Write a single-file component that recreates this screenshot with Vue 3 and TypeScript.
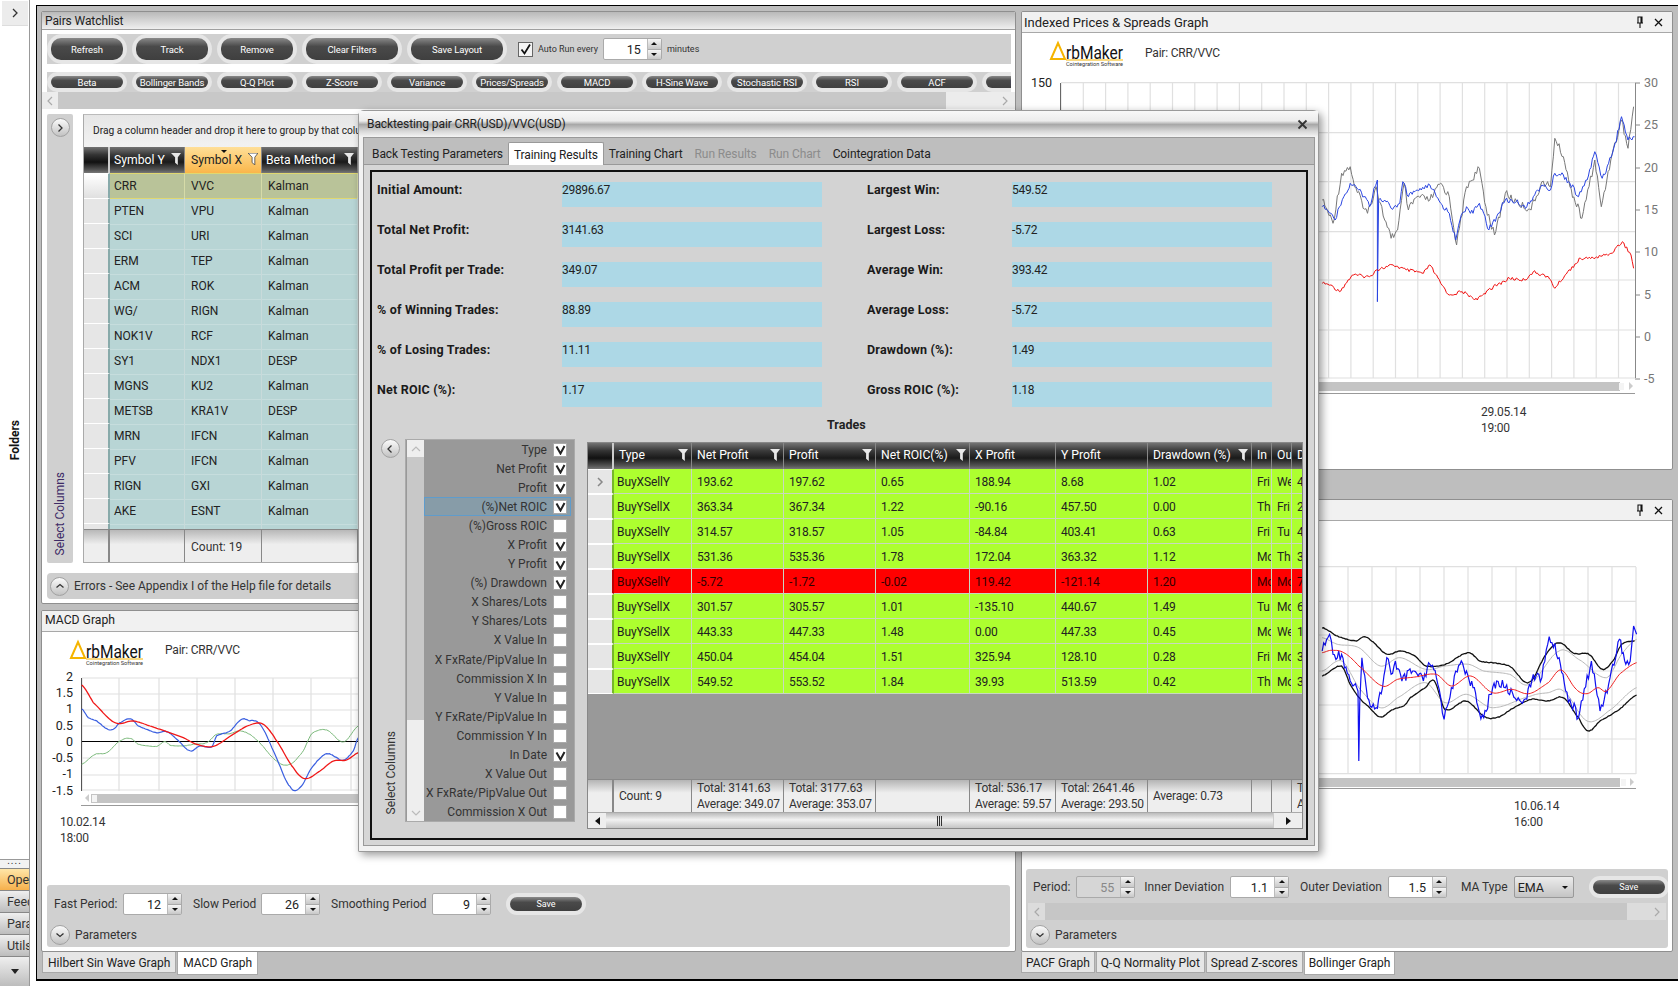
<script setup lang="ts">
type Pt = [number, number]

// chart traces, read off the reference; x/y are in the zoomed crop's units
function trace(raw: Pt[], x0: number, sx: number, y0: number, amp = 0, smooth = false): string {
  const out: string[] = []
  const step = 1.4
  let n = 0
  for (let i = 0; i < raw.length - 1; i++) {
    const [ax, ay] = raw[i]
    const [bx, by] = raw[i + 1]
    const before = raw[Math.max(0, i - 1)][1]
    const after = raw[Math.min(raw.length - 1, i + 2)][1]
    const x1 = x0 + ax / sx
    const x2 = x0 + bx / sx
    const parts = Math.max(1, Math.round(Math.abs(x2 - x1) / step))
    for (let k = 0; k < parts; k++) {
      const t = k / parts
      const r = Math.sin(++n * 12.9898) * 43758.5453
      const noise = (r - Math.floor(r) - 0.5) * amp
      let v = ay + (by - ay) * t
      if (smooth) {
        v = 0.5 * (2 * ay + (by - before) * t + (2 * before - 5 * ay + 4 * by - after) * t * t + (3 * ay - before - 3 * by + after) * t * t * t)
      }
      const y = y0 + v / 3 + (k === 0 && !smooth ? 0 : noise)
      out.push(`${(x1 + (x2 - x1) * t).toFixed(1)},${y.toFixed(1)}`)
    }
  }
  const last = raw[raw.length - 1]
  out.push(`${(x0 + last[0] / sx).toFixed(1)},${(y0 + last[1] / 3).toFixed(1)}`)
  return out.join(' ')
}

const S = 2.322

const priceBlue = trace([[725,620],[745,640],[755,660],[765,620],[775,590],[785,570],[790,550],[810,570],[825,590],[835,620],[845,565],[853,540],[853,905],[856,600],[870,600],[885,625],[905,610],[912,545],[925,590],[940,575],[955,570],[975,555],[990,590],[1000,610],[1020,640],[1035,720],[1045,660],[1060,620],[1075,640],[1090,610],[1100,640],[1112,690],[1130,650],[1150,600],[1175,605],[1200,620],[1215,590],[1235,555],[1255,570],[1265,520],[1285,525],[1300,550],[1320,590],[1340,540],[1358,455],[1375,535],[1390,490],[1405,430],[1420,350],[1435,420],[1450,410]], 1010, S, 0, 6)
const priceGray = trace([[725,600],[750,670],[770,520],[790,500],[800,560],[830,640],[850,560],[870,660],[885,715],[900,690],[915,550],[925,630],[945,590],[975,600],[1000,550],[1020,590],[1037,735],[1060,560],[1090,505],[1105,620],[1125,705],[1150,580],[1180,610],[1210,630],[1235,545],[1255,560],[1265,415],[1285,470],[1300,560],[1328,655],[1358,480],[1373,620],[1395,480],[1420,360],[1435,445],[1448,320]], 1010, S, 0, 8)
const priceRed = trace([[725,850],[745,855],[765,875],[795,825],[835,830],[850,810],[890,795],[920,810],[960,820],[975,795],[1000,850],[1020,885],[1050,875],[1085,900],[1110,870],[1160,835],[1195,840],[1215,815],[1250,830],[1265,865],[1295,815],[1325,775],[1355,775],[1395,760],[1422,725],[1442,765],[1448,805]], 1010, S, 0, 3.5)

const bbUpper = trace([[725,410],[760,435],[805,450],[820,437],[840,450],[875,490],[905,480],[940,495],[965,525],[1010,520],[1065,485],[1090,510],[1160,525],[1205,575],[1245,490],[1275,455],[1310,487],[1345,490],[1375,535],[1400,510],[1420,460],[1450,450]], 1010, S, 490, 0.7, true)
const bbLower = trace([[725,555],[770,525],[790,580],[810,620],[835,650],[860,678],[890,655],[915,645],[930,620],[965,590],[985,570],[1010,655],[1060,630],[1100,675],[1130,680],[1170,650],[1210,625],[1250,630],[1285,620],[1320,680],[1342,720],[1370,690],[1415,655],[1455,612]], 1010, S, 490, 0.7, true)
const bbInnerUp = trace([[725,440],[760,460],[810,470],[860,525],[905,500],[965,535],[1010,525],[1065,520],[1100,540],[1160,550],[1205,580],[1275,480],[1320,505],[1385,560],[1420,490],[1455,445]], 1010, S, 490, 0, true)
const bbInnerLow = trace([[725,540],[770,510],[810,590],[860,650],[900,620],[965,575],[1010,635],[1060,610],[1120,650],[1210,615],[1250,605],[1285,600],[1340,690],[1390,660],[1455,590]], 1010, S, 490, 0, true)
const bbMa = trace([[725,485],[745,478],[775,485],[810,525],[865,585],[900,565],[940,558],[990,550],[1025,585],[1070,555],[1120,605],[1165,595],[1205,608],[1250,575],[1280,537],[1315,595],[1340,608],[1365,590],[1385,600],[1415,550],[1455,515]], 1010, S, 490, 0, true)
const bbBlue = trace([[725,480],[742,430],[750,490],[770,490],[790,570],[808,600],[810,810],[812,640],[817,500],[830,620],[850,650],[865,590],[875,500],[885,550],[895,510],[910,570],[935,540],[960,570],[975,520],[990,560],[1000,620],[1008,685],[1025,590],[1045,520],[1060,540],[1075,590],[1090,665],[1100,680],[1115,610],[1130,570],[1150,590],[1180,620],[1200,625],[1215,550],[1235,560],[1252,437],[1275,500],[1290,600],[1320,680],[1350,510],[1370,660],[1390,580],[1415,445],[1430,520],[1440,510],[1448,405],[1455,430]], 1010, S, 490, 11)

const macdRed = trace([[245,372],[280,425],[345,485],[400,480],[450,495],[500,512],[550,530],[590,550],[640,556],[700,520],[750,492],[790,490],[830,540],[880,620],[915,653],[960,630],[1000,600],[1040,597],[1075,575]], 0, 3, 560, 0, true)
const macdBlue = trace([[245,443],[265,470],[290,480],[320,503],[340,505],[360,485],[392,473],[415,495],[470,515],[500,512],[530,535],[570,570],[600,555],[635,558],[650,525],[690,510],[725,475],[745,478],[780,490],[820,570],[870,677],[900,680],[935,620],[980,578],[1030,598],[1060,570],[1075,530]], 0, 3, 560, 0.5, true)
const macdGreen = trace([[245,610],[285,580],[320,575],[360,540],[392,532],[415,550],[470,556],[495,542],[510,553],[550,555],[580,550],[620,545],[650,520],[690,518],[725,510],[770,537],[830,600],[870,610],[910,570],[935,518],[980,507],[1030,543],[1075,495]], 0, 3, 560, 0.4, true)

function steps(from: number, to: number, by: number): number[] {
  const list: number[] = []
  for (let v = from; v <= to + 0.5; v += by) list.push(v)
  return list
}

const priceV = steps(1061, 1635, 22.3)
const priceH = [82.7, 132.7, 181.7, 231.7, 280, 330, 378]
const priceAxis: [string, number][] = [['30', 83], ['25', 125], ['20', 168], ['15', 210], ['10', 252], ['5', 295], ['0', 337], ['-5', 379]]
const bbV = steps(1348, 1636, 24)
const bbH = [565.7, 600.3, 634, 670, 704, 738, 772.7]
const macdV = [82, 119, 159, 197, 235, 273, 311, 351]
const macdH = [677, 693, 709, 725, 757, 774, 789]
const macdAxis: [string, number][] = [['2', 676], ['1.5', 692], ['1', 708], ['0.5', 725], ['0', 741], ['-0.5', 757], ['-1', 773], ['-1.5', 790]]

const mainButtons = [
  { label: 'Refresh', w: 80 },
  { label: 'Track', w: 80 },
  { label: 'Remove', w: 80 },
  { label: 'Clear Filters', w: 100 },
  { label: 'Save Layout', w: 100 }
]
const graphButtons = ['Beta', 'Bollinger Bands', 'Q-Q Plot', 'Z-Score', 'Variance', 'Prices/Spreads', 'MACD', 'H-Sine Wave', 'Stochastic RSI', 'RSI', 'ACF', 'PACF']

const pairs = [
  ['CRR', 'VVC', 'Kalman'], ['PTEN', 'VPU', 'Kalman'], ['SCI', 'URI', 'Kalman'], ['ERM', 'TEP', 'Kalman'],
  ['ACM', 'ROK', 'Kalman'], ['WG/', 'RIGN', 'Kalman'], ['NOK1V', 'RCF', 'Kalman'], ['SY1', 'NDX1', 'DESP'],
  ['MGNS', 'KU2', 'Kalman'], ['METSB', 'KRA1V', 'DESP'], ['MRN', 'IFCN', 'Kalman'], ['PFV', 'IFCN', 'Kalman'],
  ['RIGN', 'GXI', 'Kalman'], ['AKE', 'ESNT', 'Kalman'], ['', '', '']
]

const stats = [
  ['Initial Amount:', '29896.67', 'Largest Win:', '549.52'],
  ['Total Net Profit:', '3141.63', 'Largest Loss:', '-5.72'],
  ['Total Profit per Trade:', '349.07', 'Average Win:', '393.42'],
  ['% of Winning Trades:', '88.89', 'Average Loss:', '-5.72'],
  ['% of Losing Trades:', '11.11', 'Drawdown (%):', '1.49'],
  ['Net ROIC (%):', '1.17', 'Gross ROIC (%):', '1.18']
]

const columnChoices: [string, boolean][] = [
  ['Type', true], ['Net Profit', true], ['Profit', true], ['(%)Net ROIC', true], ['(%)Gross ROIC', false],
  ['X Profit', true], ['Y Profit', true], ['(%) Drawdown', true], ['X Shares/Lots', false], ['Y Shares/Lots', false],
  ['X Value In', false], ['X FxRate/PipValue In', false], ['Commission X In', false], ['Y Value In', false],
  ['Y FxRate/PipValue In', false], ['Commission Y In', false], ['In Date', true], ['X Value Out', false],
  ['X FxRate/PipValue Out', false], ['Commission X Out', false]
]

const tradeHeads: [string, boolean][] = [
  ['Type', true], ['Net Profit', true], ['Profit', true], ['Net ROIC(%)', true], ['X Profit', false],
  ['Y Profit', false], ['Drawdown (%)', true], ['In', false], ['Ou', false], ['D', false]
]
const trades = [
  ['BuyXSellY', '193.62', '197.62', '0.65', '188.94', '8.68', '1.02', 'Fri', 'We', '4'],
  ['BuyYSellX', '363.34', '367.34', '1.22', '-90.16', '457.50', '0.00', 'Th', 'Fri', '2'],
  ['BuyXSellY', '314.57', '318.57', '1.05', '-84.84', '403.41', '0.63', 'Fri', 'Tu', '4'],
  ['BuyYSellX', '531.36', '535.36', '1.78', '172.04', '363.32', '1.12', 'Mo', 'Th', '3'],
  ['BuyXSellY', '-5.72', '-1.72', '-0.02', '119.42', '-121.14', '1.20', 'Mo', 'Mo', '7'],
  ['BuyYSellX', '301.57', '305.57', '1.01', '-135.10', '440.67', '1.49', 'Tu', 'Mo', '6'],
  ['BuyYSellX', '443.33', '447.33', '1.48', '0.00', '447.33', '0.45', 'Mo', 'We', '1'],
  ['BuyXSellY', '450.04', '454.04', '1.51', '325.94', '128.10', '0.28', 'Fri', 'Mo', '3'],
  ['BuyYSellX', '549.52', '553.52', '1.84', '39.93', '513.59', '0.42', 'Th', 'Mo', '3']
]
const tradeFoot = [
  ['Count: 9'],
  ['Total: 3141.63', 'Average: 349.07'],
  ['Total: 3177.63', 'Average: 353.07'],
  [],
  ['Total: 536.17', 'Average: 59.57'],
  ['Total: 2641.46', 'Average: 293.50'],
  ['Average: 0.73'],
  [],
  [],
  ['Total', 'Average']
]

const macdParams = [
  { label: 'Fast Period:', value: '12' },
  { label: 'Slow Period', value: '26' },
  { label: 'Smoothing Period', value: '9' }
]
</script>

<template>
  <div class="app">
    <aside class="sidebar">
      <div class="side-open">
        <svg width="10" height="12" viewBox="0 0 10 12"><path d="M3 2l4 4-4 4" fill="none" stroke="#333" stroke-width="1.3" /></svg>
      </div>
      <div class="side-title">Folders</div>
      <div class="side-grip">....</div>
      <div class="side-item active">Open</div>
      <div class="side-item">Feeds</div>
      <div class="side-item">Params</div>
      <div class="side-item">Utils</div>
      <div class="side-item more"><svg width="8" height="5" viewBox="0 0 8 5"><path d="M0 0h8L4 5z" fill="#222" /></svg></div>
    </aside>

    <main class="workspace">
      <div class="left-col">
        <section class="panel watchlist">
          <header class="watch-title">Pairs Watchlist</header>
          <div class="watch-body">
            <div class="toolbar">
              <button v-for="b in mainButtons" :key="b.label" class="pill big" :class="{ wide: b.w === 100 }"><span>{{ b.label }}</span></button>
              <span class="check-box">
                <svg width="13" height="13" viewBox="0 0 13 13"><path d="M2.5 6.5l3 4L11 1.5" fill="none" stroke="#111" stroke-width="1.8" /></svg>
              </span>
              <span class="auto-text">Auto Run every</span>
              <div class="spin auto-spin">
                <span class="spin-val">15</span>
                <span class="spin-btns"><i class="up"></i><i class="down"></i></span>
              </div>
              <span class="auto-text minutes">minutes</span>
            </div>
            <div class="graph-row">
              <button v-for="b in graphButtons" :key="b" class="pill small"><span>{{ b }}</span></button>
            </div>
            <div class="hscroll">
              <span class="hs-left"><svg width="8" height="10" viewBox="0 0 8 10"><path d="M6 1L2 5l4 4" fill="none" stroke="#aaa" stroke-width="1.2" /></svg></span>
              <span class="hs-right"><svg width="8" height="10" viewBox="0 0 8 10"><path d="M2 1l4 4-4 4" fill="none" stroke="#aaa" stroke-width="1.2" /></svg></span>
            </div>
            <div class="watch-main">
              <div class="select-side">
                <span class="round">
                  <svg width="10" height="10" viewBox="0 0 10 10"><path d="M3.5 1.5L7 5 3.5 8.5" fill="none" stroke="#333" stroke-width="1.3" /></svg>
                </span>
                <span class="vert-label">Select Columns</span>
              </div>
              <div class="pair-grid">
                <div class="group-head">Drag a column header and drop it here to group by that column</div>
                <div class="pair-cols pair-head">
                  <span class="corner"></span>
                  <span class="hcell">Symbol Y<svg class="funnel" viewBox="0 0 11 13"><path d="M0 0h11L7.5 4.5V13L4.5 10.5V4.5z" fill="#e8e8e8" /></svg></span>
                  <span class="hcell sorted">Symbol X<i class="sort-mark"></i><svg class="funnel" viewBox="0 0 11 13"><path d="M0 0h11L7.5 4.5V13L4.5 10.5V4.5z" fill="#fff" stroke="#333" stroke-width=".8" /></svg></span>
                  <span class="hcell">Beta Method<svg class="funnel" viewBox="0 0 11 13"><path d="M0 0h11L7.5 4.5V13L4.5 10.5V4.5z" fill="#e8e8e8" /></svg></span>
                  <span class="hcell"></span>
                </div>
                <div class="pair-rows">
                  <div v-for="(p, i) in pairs" :key="i" class="pair-cols pair-row" :class="{ current: i === 0 }">
                    <span class="rowhead"></span>
                    <span v-for="(c, j) in p" :key="j" class="pcell">{{ c }}</span>
                    <span class="pcell"></span>
                  </div>
                </div>
                <div class="pair-cols pair-foot">
                  <span class="fcell"></span>
                  <span class="fcell"></span>
                  <span class="fcell">Count: 19</span>
                  <span class="fcell"></span>
                  <span class="fcell"></span>
                </div>
              </div>
            </div>
            <div class="errors-bar">
              <span class="round">
                <svg width="10" height="10" viewBox="0 0 10 10"><path d="M1.5 6.5L5 3.5l3.5 3" fill="none" stroke="#333" stroke-width="1.3" /></svg>
              </span>
              <span>Errors - See Appendix I of the Help file for details</span>
            </div>
          </div>
        </section>

        <section class="panel macd">
          <header class="plain-title">MACD Graph</header>
          <div class="chart-body">
            <svg class="chart" width="973" height="253" viewBox="42 631 973 253">
              <path d="M71 657L78 641L85 657Z" fill="none" stroke="#f5b400" stroke-width="2" />
              <text x="86" y="657" class="logo-main" textLength="57" lengthAdjust="spacingAndGlyphs">rbMaker</text>
              <line x1="86" y1="658" x2="143" y2="658" stroke="#f5b400" />
              <text x="86" y="664" class="logo-sub" textLength="57" lengthAdjust="spacingAndGlyphs">Cointegration  Software</text>
              <text x="165" y="653" class="chart-text">Pair: CRR/VVC</text>
              <line v-for="x in macdV" :key="x" :x1="x" y1="677" :x2="x" y2="790" class="grid-line" />
              <line v-for="y in macdH" :key="y" x1="82" :y1="y" x2="1010" :y2="y" class="grid-line" />
              <line x1="81.5" y1="677" x2="81.5" y2="790" stroke="#555" />
              <line x1="82" y1="740.5" x2="1010" y2="740.5" stroke="#000" />
              <polyline :points="macdGreen" fill="none" stroke="#7ab87a" />
              <polyline :points="macdBlue" fill="none" stroke="#3a5fe0" stroke-width="1.2" />
              <polyline :points="macdRed" fill="none" stroke="#f01818" stroke-width="1.3" />
              <text v-for="t in macdAxis" :key="t[0]" x="73" :y="t[1] + 4" class="axis-text end">{{ t[0] }}</text>
              <path d="M85 797l4 -4v8z" fill="#ccc" />
              <rect x="91" y="793" width="919" height="9" fill="#c4c4c4" />
              <rect x="92" y="794" width="5" height="7" fill="#f4f4f4" />
              <line x1="81" y1="804.5" x2="1010" y2="804.5" stroke="#999" />
              <text x="60" y="825" class="chart-text">10.02.14</text>
              <text x="60" y="841" class="chart-text">18:00</text>
            </svg>
            <div class="params">
              <div class="param-line">
                <template v-for="p in macdParams" :key="p.label">
                  <span class="param-label">{{ p.label }}</span>
                  <div class="spin">
                    <span class="spin-val">{{ p.value }}</span>
                    <span class="spin-btns"><i class="up"></i><i class="down"></i></span>
                  </div>
                </template>
                <button class="pill save"><span>Save</span></button>
              </div>
              <div class="param-foot">
                <span class="round">
                  <svg width="10" height="10" viewBox="0 0 10 10"><path d="M1.5 3.5L5 6.5l3.5-3" fill="none" stroke="#333" stroke-width="1.3" /></svg>
                </span>
                <span>Parameters</span>
              </div>
            </div>
          </div>
        </section>
        <nav class="tabs">
          <span class="tab">Hilbert Sin Wave Graph</span>
          <span class="tab on">MACD Graph</span>
        </nav>
      </div>

      <div class="right-col">
        <section class="panel prices">
          <header class="plain-title with-tools">
            <span>Indexed Prices &amp; Spreads Graph</span>
            <svg class="pin" width="8" height="12" viewBox="0 0 8 12"><path d="M2 1h4v6H2zM1 7h6M4 7v5M5 1v6" fill="none" stroke="#111" stroke-width="1.1" /></svg>
            <svg class="close" width="9" height="9" viewBox="0 0 9 9"><path d="M1 1l7 7M8 1L1 8" stroke="#111" stroke-width="1.3" /></svg>
          </header>
          <svg class="chart" width="650" height="437" viewBox="1022 33 650 437">
            <path d="M1051 59L1058 43L1065 59Z" fill="none" stroke="#f5b400" stroke-width="2" />
            <text x="1066" y="59" class="logo-main" textLength="57" lengthAdjust="spacingAndGlyphs">rbMaker</text>
            <line x1="1066" y1="60" x2="1123" y2="60" stroke="#f5b400" />
            <text x="1066" y="66" class="logo-sub" textLength="57" lengthAdjust="spacingAndGlyphs">Cointegration  Software</text>
            <text x="1145" y="57" class="chart-text">Pair: CRR/VVC</text>
            <line v-for="x in priceV" :key="x" :x1="x" y1="83" :x2="x" y2="378" class="grid-line" />
            <line v-for="y in priceH" :key="y" x1="1061" :y1="y" x2="1635" :y2="y" class="grid-line" />
            <line x1="1060.5" y1="83" x2="1060.5" y2="378" stroke="#666" />
            <line x1="1635.5" y1="83" x2="1635.5" y2="378" stroke="#888" />
            <line v-for="t in priceAxis" :key="t[0]" x1="1635" :y1="t[1]" x2="1640" :y2="t[1]" stroke="#888" />
            <polyline :points="priceGray" fill="none" stroke="#777" />
            <polyline :points="priceBlue" fill="none" stroke="#2a45e0" />
            <polyline :points="priceRed" fill="none" stroke="#f01010" />
            <text x="1052" y="87" class="axis-text end">150</text>
            <text v-for="t in priceAxis" :key="t[0]" x="1644" :y="t[1] + 4" class="axis-text gray">{{ t[0] }}</text>
            <rect x="1061" y="382" width="559" height="9" fill="#c4c4c4" />
            <rect x="1619" y="383" width="5" height="7" fill="#f4f4f4" />
            <path d="M1629 382l4 4-4 4z" fill="#ccc" />
            <line x1="1061" y1="393.5" x2="1635" y2="393.5" stroke="#999" />
            <text x="1481" y="416" class="chart-text">29.05.14</text>
            <text x="1481" y="432" class="chart-text">19:00</text>
          </svg>
        </section>

        <section class="panel bollinger">
          <header class="plain-title with-tools">
            <span></span>
            <svg class="pin" width="8" height="12" viewBox="0 0 8 12"><path d="M2 1h4v6H2zM1 7h6M4 7v5M5 1v6" fill="none" stroke="#111" stroke-width="1.1" /></svg>
            <svg class="close" width="9" height="9" viewBox="0 0 9 9"><path d="M1 1l7 7M8 1L1 8" stroke="#111" stroke-width="1.3" /></svg>
          </header>
          <svg class="chart" width="650" height="348" viewBox="1022 520 650 348">
            <line v-for="x in bbV" :key="x" :x1="x" y1="566" :x2="x" y2="773" class="grid-line" />
            <line v-for="y in bbH" :key="y" x1="1061" :y1="y" x2="1636" :y2="y" class="grid-line" />
            <polyline :points="bbInnerUp" fill="none" stroke="#b8b8b8" />
            <polyline :points="bbInnerLow" fill="none" stroke="#b8b8b8" />
            <polyline :points="bbUpper" fill="none" stroke="#111" stroke-width="1.3" />
            <polyline :points="bbLower" fill="none" stroke="#111" stroke-width="1.3" />
            <polyline :points="bbBlue" fill="none" stroke="#1010f0" stroke-width="1.2" />
            <polyline :points="bbMa" fill="none" stroke="#f02020" />
            <rect x="1061" y="777" width="559" height="9" fill="#c4c4c4" />
            <rect x="1621" y="778" width="5" height="7" fill="#f4f4f4" />
            <path d="M1630 777l4 4-4 4z" fill="#ccc" />
            <line x1="1061" y1="787.5" x2="1636" y2="787.5" stroke="#999" />
            <text x="1514" y="809" class="chart-text">10.06.14</text>
            <text x="1514" y="825" class="chart-text">16:00</text>
          </svg>
          <div class="params bb-params">
            <div class="param-line bb-line">
              <span class="param-label">Period:</span>
              <div class="spin off">
                <span class="spin-val">55</span>
                <span class="spin-btns"><i class="up"></i><i class="down"></i></span>
              </div>
              <span class="param-label">Inner Deviation</span>
              <div class="spin">
                <span class="spin-val">1.1</span>
                <span class="spin-btns"><i class="up"></i><i class="down"></i></span>
              </div>
              <span class="param-label">Outer Deviation</span>
              <div class="spin">
                <span class="spin-val">1.5</span>
                <span class="spin-btns"><i class="up"></i><i class="down"></i></span>
              </div>
              <span class="param-label">MA Type</span>
              <div class="combo"><span>EMA</span><i class="down"></i></div>
              <button class="pill save cut"><span>Save</span></button>
            </div>
            <div class="bb-scroll">
              <span class="bb-left"><svg width="8" height="10" viewBox="0 0 8 10"><path d="M6 1L2 5l4 4" fill="none" stroke="#aaa" stroke-width="1.2" /></svg></span>
              <span class="bb-right"><svg width="8" height="10" viewBox="0 0 8 10"><path d="M2 1l4 4-4 4" fill="none" stroke="#aaa" stroke-width="1.2" /></svg></span>
            </div>
            <div class="param-foot bb-foot">
              <span class="round">
                <svg width="10" height="10" viewBox="0 0 10 10"><path d="M1.5 3.5L5 6.5l3.5-3" fill="none" stroke="#333" stroke-width="1.3" /></svg>
              </span>
              <span>Parameters</span>
            </div>
          </div>
        </section>
        <nav class="tabs">
          <span class="tab">PACF Graph</span>
          <span class="tab">Q-Q Normality Plot</span>
          <span class="tab">Spread Z-scores</span>
          <span class="tab on">Bollinger Graph</span>
        </nav>
      </div>
    </main>

    <div class="modal">
      <header class="modal-title">
        <span>Backtesting pair CRR(USD)/VVC(USD)</span>
        <svg width="11" height="11" viewBox="0 0 11 11"><path d="M1.5 1.5l8 8M9.5 1.5l-8 8" stroke="#333" stroke-width="1.8" /></svg>
      </header>
      <div class="modal-frame">
        <nav class="modal-tabs">
          <span class="mtab">Back Testing Parameters</span>
          <span class="mtab on">Training Results</span>
          <span class="mtab">Training Chart</span>
          <span class="mtab dim">Run Results</span>
          <span class="mtab dim">Run Chart</span>
          <span class="mtab last">Cointegration Data</span>
        </nav>
        <div class="modal-pane">
          <div class="results">
            <div class="stat-grid">
              <template v-for="s in stats" :key="s[0]">
                <span class="stat-label">{{ s[0] }}</span>
                <span class="stat-val">{{ s[1] }}</span>
                <span></span>
                <span class="stat-label">{{ s[2] }}</span>
                <span class="stat-val">{{ s[3] }}</span>
              </template>
            </div>
            <div class="trades-title">Trades</div>
            <div class="trades-area">
              <div class="select-side inner">
                <span class="round">
                  <svg width="10" height="10" viewBox="0 0 10 10"><path d="M6.5 1.5L3 5l3.500 3.500" fill="none" stroke="#333" stroke-width="1.3" /></svg>
                </span>
                <span class="vert-label plain">Select Columns</span>
              </div>
              <div class="col-list">
                <div class="col-scroll">
                  <span class="cs-up"><svg width="10" height="6" viewBox="0 0 10 6"><path d="M1 5l4-4 4 4" fill="none" stroke="#bbb" stroke-width="1.2" /></svg></span>
                  <span class="cs-track"></span>
                  <span class="cs-down"><svg width="10" height="6" viewBox="0 0 10 6"><path d="M1 1l4 4 4-4" fill="none" stroke="#bbb" stroke-width="1.2" /></svg></span>
                </div>
                <div class="col-items">
                  <div v-for="(c, i) in columnChoices" :key="c[0]" class="col-item" :class="{ hot: i === 3 }">
                    <span>{{ c[0] }}</span>
                    <span class="col-check">
                      <svg v-if="c[1]" width="11" height="11" viewBox="0 0 11 11"><path d="M1.5 2.5L5.5 9.5 9.5 2" fill="none" stroke="#222" stroke-width="2" /></svg>
                    </span>
                  </div>
                </div>
              </div>
              <div class="trade-grid">
                <div class="trade-cols trade-head">
                  <span class="corner"></span>
                  <span v-for="h in tradeHeads" :key="h[0]" class="hcell small-h">{{ h[0] }}<svg v-if="h[1]" class="funnel" viewBox="0 0 11 13"><path d="M0 0h11L7.5 4.5V13L4.5 10.5V4.5z" fill="#e8e8e8" /></svg></span>
                </div>
                <div class="trade-rows">
                  <div v-for="(t, i) in trades" :key="i" class="trade-cols trade-row" :class="{ loss: i === 4 }">
                    <span class="rowhead">
                      <svg v-if="i === 0" width="8" height="10" viewBox="0 0 8 10"><path d="M2 1l4 4-4 4" fill="none" stroke="#888" stroke-width="1.5" /></svg>
                    </span>
                    <span v-for="(c, j) in t" :key="j" class="tcell">{{ c }}</span>
                  </div>
                </div>
                <div class="trade-cols trade-foot">
                  <span class="fcell"></span>
                  <span v-for="(f, i) in tradeFoot" :key="i" class="fcell two">
                    <span v-for="line in f" :key="line">{{ line }}</span>
                  </span>
                </div>
                <div class="trade-scroll">
                  <span class="ts-btn"><svg width="5" height="8" viewBox="0 0 5 8"><path d="M5 0v8L0 4z" fill="#111" /></svg></span>
                  <span class="ts-thumb"><i></i><i></i><i></i></span>
                  <span class="ts-btn"><svg width="5" height="8" viewBox="0 0 5 8"><path d="M0 0v8l5-4z" fill="#111" /></svg></span>
                </div>
              </div>
            </div>
          </div>
        </div>
      </div>
    </div>
  </div>
</template>

<style>
html, body {
  margin: 0;
  background: #fff;
  overflow: hidden;
}
</style>

<style scoped>
.app {
  position: relative;
  display: flex;
  width: 1680px;
  height: 986px;
  background: #fff;
  color: #222;
  font-family: Roboto, "Liberation Sans", sans-serif;
  font-size: 12px;
  overflow: hidden;
}

.sidebar {
  display: flex;
  flex-direction: column;
  width: 29px;
  height: 986px;
  border-right: 1px solid #999;
  box-sizing: content-box;
}
.side-open {
  display: flex;
  align-items: center;
  justify-content: center;
  height: 24px;
  margin: 1px 1px 0 2px;
  background: #ececec;
  border-bottom: 1px solid #ddd;
}
.side-title {
  margin: 394px auto 0;
  padding-right: 1px;
  writing-mode: vertical-rl;
  transform: rotate(180deg);
  font-weight: 700;
  font-size: 12px;
  color: #111;
}
.side-grip {
  margin-top: auto;
  height: 8px;
  line-height: 2px;
  text-align: center;
  font-size: 10px;
  letter-spacing: 1px;
  color: #333;
  border-top: 1px solid #999;
  background: #f2f2f2;
}
.side-item {
  height: 21px;
  line-height: 21px;
  padding-left: 7px;
  overflow: hidden;
  white-space: nowrap;
  border-top: 1px solid #888;
  background: linear-gradient(#efefef, #bdbdbd);
  color: #333;
  font-size: 12.5px;
}
.side-item.active {
  background: linear-gradient(#ffe6a8, #f6b04c);
}
.side-item.more {
  display: flex;
  align-items: center;
  justify-content: center;
  height: 29px;
  padding: 0;
}

.workspace {
  display: flex;
  gap: 5px;
  box-sizing: border-box;
  height: 976px;
  width: 1642px;
  margin: 5px 0 0 6px;
  padding: 5px 5px 0 4px;
  background: #bebebe;
  border: solid #000;
  border-width: 1px 0 2px 1px;
}
.left-col {
  display: flex;
  flex-direction: column;
  width: 975px;
  flex: none;
}
.right-col {
  display: flex;
  flex-direction: column;
  width: 652px;
  flex: none;
}

.panel {
  box-sizing: border-box;
  border: 1px solid #8f8f8f;
  border-radius: 2px;
  background: #fff;
  overflow: hidden;
}
.watchlist {
  height: 593px;
  flex: none;
  margin-bottom: 6px;
}
.watch-title {
  height: 17px;
  padding-left: 3px;
  line-height: 19px;
  letter-spacing: -0.1px;
  background: linear-gradient(#b9b9b9, #efefef);
  border-bottom: 1px solid #a0a0a0;
  color: #222;
}
.watch-body {
  padding: 4px 4px 0 5px;
  overflow: hidden;
}
.toolbar {
  display: flex;
  align-items: center;
  gap: 5px;
  height: 30px;
  background: #d0d0d0;
}
.pill {
  flex: none;
  box-sizing: border-box;
  display: flex;
  align-items: stretch;
  width: 80px;
  margin: 0;
  padding: 0;
  border: 0;
  background: #e6e6e6;
  border-radius: 16px;
  font-family: inherit;
}
.pill span {
  flex: 1;
  margin: 4px;
  border-radius: 10px;
  background: linear-gradient(#8a8a8a, #4a4a4a 38%, #3f3f3f);
  color: #fff;
  font-size: 9.5px;
  letter-spacing: -0.1px;
  display: flex;
  align-items: center;
  justify-content: center;
  white-space: nowrap;
}
.pill.big {
  height: 30px;
}
.pill.big.wide {
  width: 100px;
}
.pill.small {
  height: 20px;
}
.check-box {
  display: flex;
  width: 13px;
  height: 13px;
  margin-left: 6px;
  background: #f4f4f4;
  border: 1px solid #666;
  flex: none;
}
.auto-text {
  font-size: 9px;
  color: #333;
  white-space: nowrap;
}
.spin {
  flex: none;
  display: flex;
  box-sizing: border-box;
  width: 59px;
  height: 22px;
  background: #fff;
  border: 1px solid #aaa;
  border-radius: 2px;
}
.spin-val {
  flex: 1;
  text-align: right;
  padding-right: 6px;
  line-height: 21px;
  font-size: 12.5px;
  color: #222;
}
.spin-btns {
  display: flex;
  flex-direction: column;
  width: 13px;
  flex: none;
  border-left: 1px solid #bbb;
  background: #eee;
}
.spin-btns i {
  flex: 1;
  display: flex;
  align-items: center;
  justify-content: center;
  background: linear-gradient(#f6f6f6, #c8c8c8);
  border-bottom: 1px solid #aaa;
}
.spin-btns i:last-child {
  border-bottom: 0;
}
.up::before,
.down::before {
  content: "";
  border-left: 3px solid transparent;
  border-right: 3px solid transparent;
}
.up::before {
  border-bottom: 3px solid #111;
}
.down::before {
  border-top: 3px solid #111;
}
.spin.off {
  background: #d6d6d6;
}
.spin.off .spin-val {
  color: #888;
}
.graph-row {
  display: flex;
  gap: 5px;
  height: 20px;
  margin-top: 8px;
  background: #d0d0d0;
  overflow: hidden;
}
.hscroll {
  display: flex;
  justify-content: space-between;
  height: 17px;
  margin: 0 -4px 5px -5px;
  background: #c8c8c8;
}
.hs-left,
.hs-right {
  display: flex;
  align-items: center;
  background: #ececec;
}
.hs-left {
  width: 16px;
  justify-content: center;
}
.hs-right {
  width: 69px;
  justify-content: flex-end;
  padding-right: 6px;
  box-sizing: border-box;
}

.watch-main {
  display: flex;
  gap: 10px;
  height: 449px;
}
.select-side {
  position: relative;
  display: flex;
  flex-direction: column;
  align-items: center;
  width: 26px;
  height: 449px;
  flex: none;
  background: #d0d0d0;
  border-radius: 2px;
}
.round {
  flex: none;
  display: flex;
  align-items: center;
  justify-content: center;
  box-sizing: border-box;
  width: 19px;
  height: 19px;
  margin-top: 4px;
  border-radius: 50%;
  border: 1px solid #a2a2a2;
  background: linear-gradient(#fbfbfb, #c2c2c2);
}
.vert-label {
  margin-top: auto;
  margin-bottom: 8px;
  writing-mode: vertical-rl;
  transform: rotate(180deg);
  color: #3d2a66;
  font-size: 12px;
}
.vert-label.plain {
  color: #333;
}

.pair-grid {
  flex: 1;
  box-sizing: border-box;
  display: flex;
  flex-direction: column;
  border: 1px solid #aaa;
  border-top-color: #bbb;
  overflow: hidden;
}
.group-head {
  height: 32px;
  line-height: 31px;
  padding-left: 9px;
  font-size: 10.2px;
  color: #222;
  background: linear-gradient(#e6e6e6, #f2f2f2);
  flex: none;
}
.pair-cols {
  display: grid;
  grid-template-columns: 26px 75px 77px 96px 1fr;
  flex: none;
}
.pair-head,
.trade-head {
  height: 26px;
  background: linear-gradient(#737373, #3a3a3a 30%, #1a1a1a 58%, #555 88%, #777);
}
.corner {
  background: linear-gradient(#737373, #333 30%, #111 58%, #555 88%, #777);
  border-right: 2px solid #ccc;
}
.hcell {
  position: relative;
  display: block;
  padding: 6px 0 0 4px;
  border-right: 1px solid #888;
  color: #fff;
  font-size: 12.2px;
  white-space: nowrap;
  overflow: hidden;
}
.small-h {
  padding-left: 5px;
  padding-top: 5px;
}
.hcell.sorted {
  background: linear-gradient(#ffdf98, #fab64a);
  color: #222;
  padding-left: 6px;
}
.sort-mark {
  position: absolute;
  top: 3px;
  left: 36px;
  border-left: 3px solid transparent;
  border-right: 3px solid transparent;
  border-top: 3px solid #111;
}
.funnel {
  position: absolute;
  right: 3px;
  top: 6px;
  width: 10px;
  height: 12px;
}
.pair-rows {
  height: 356px;
  overflow: hidden;
  flex: none;
}
.pair-row {
  height: 25px;
  background: #b8d5d5;
}
.rowhead {
  display: flex;
  align-items: center;
  justify-content: center;
  box-sizing: border-box;
  background: #e6e6e6;
  border: 1px solid #fff;
  border-left: 0;
  border-right: 2px solid #8aa;
}
.pcell {
  padding-left: 6px;
  line-height: 26px;
  font-size: 12px;
  color: #222;
  border-right: 1px solid #c8dada;
  border-bottom: 1px solid #c6dddd;
  box-sizing: border-box;
}
.pcell:nth-child(2) {
  padding-left: 4px;
}
.pair-row.current {
  background: #b9c399;
}
.pair-row.current .pcell {
  border-color: #d6dba8;
  border-top: 1px solid #e0d870;
  border-bottom: 1px solid #e0d870;
  line-height: 24px;
}
.pair-row.current .rowhead {
  background: linear-gradient(#fff, #e0e0e0);
}
.pair-foot {
  height: 33px;
  background: linear-gradient(#b8b8b8, #eee 45%);
  border-top: 1px solid #888;
  box-sizing: border-box;
}
.fcell {
  padding-left: 6px;
  border-right: 1px solid #888;
  line-height: 34px;
  font-size: 12px;
  color: #333;
  overflow: hidden;
  white-space: nowrap;
}
.pair-foot .fcell:first-child {
  border-right: 2px solid #888;
}
.errors-bar {
  display: flex;
  align-items: center;
  gap: 5px;
  height: 26px;
  margin-top: 10px;
  padding-left: 3px;
  background: #cecece;
  border-radius: 4px;
  color: #333;
}
.errors-bar .round {
  margin-top: 0;
}

.macd {
  height: 342px;
  flex: none;
}
.plain-title {
  height: 20px;
  padding-left: 3px;
  line-height: 19px;
  background: #f1f1f1;
  border-bottom: 1px solid #a8a8a8;
  color: #222;
  font-size: 12.2px;
  box-sizing: content-box;
}
.with-tools {
  display: flex;
  align-items: center;
  justify-content: flex-end;
  gap: 10px;
  padding-left: 2px;
  padding-right: 9px;
  font-size: 13px;
  line-height: 20px;
}
.with-tools > span {
  margin-right: auto;
  padding-top: 2px;
}
.chart-body {
  display: flex;
  flex-direction: column;
}
.chart {
  display: block;
  flex: none;
}
.grid-line {
  stroke: #e0e0e0;
  stroke-width: 1.2;
}
.chart-text {
  font-family: Roboto, "Liberation Sans", sans-serif;
  font-size: 12px;
  letter-spacing: -0.2px;
  fill: #333;
}
.axis-text {
  font-family: Roboto, "Liberation Sans", sans-serif;
  font-size: 12.5px;
  fill: #222;
}
.axis-text.end {
  text-anchor: end;
}
.axis-text.gray {
  fill: #777;
}
.logo-main {
  font-family: Roboto, "Liberation Sans", sans-serif;
  font-size: 19px;
  fill: #111;
}
.logo-sub {
  font-family: Roboto, "Liberation Sans", sans-serif;
  font-size: 5.5px;
  fill: #333;
}
.params {
  box-sizing: border-box;
  width: 963px;
  margin-left: 5px;
  height: 62px;
  background: #d0d0d0;
  border-radius: 3px;
  padding: 8px 0 0 7px;
}
.param-line {
  display: flex;
  align-items: center;
  gap: 5px;
  height: 22px;
}
.param-label {
  color: #333;
  font-size: 12px;
  white-space: nowrap;
  margin-left: 6px;
  width: 63px;
}
.param-label:first-child {
  margin-left: 0;
  width: 64px;
}
.param-line .param-label:nth-of-type(3) {
  width: 96px;
}
.param-line .pill.save {
  margin-left: 10px;
}
.pill.save {
  height: 22px;
}
.pill.save span {
  margin: 4px;
  font-size: 9px;
}
.param-foot {
  display: flex;
  align-items: center;
  gap: 5px;
  margin: 10px 0 0 -4px;
  color: #333;
}
.param-foot .round {
  margin: 0;
  width: 20px;
  height: 20px;
}

.tabs {
  display: flex;
  align-items: flex-start;
  height: 24px;
  flex: none;
  padding-left: 1px;
}
.tab {
  box-sizing: border-box;
  height: 21px;
  line-height: 23px;
  padding: 0 5px;
  background: #e6e6e6;
  border: 1px solid #a8a8a8;
  border-top: 0;
  margin-right: 1px;
  color: #222;
  font-size: 12px;
  white-space: nowrap;
}
.tab.on {
  height: 23px;
  background: #fff;
  border-top: 0;
}
.right-col .tabs {
  padding-left: 0;
}
.right-col .tab {
  padding: 0 4px;
}

.prices {
  height: 459px;
  flex: none;
  margin-bottom: 29px;
}
.bollinger {
  height: 453px;
  flex: none;
}
.bb-params {
  width: 642px;
  height: 79px;
  margin-left: 4px;
  padding: 7px 0 0 0;
  overflow: hidden;
}
.bb-line {
  gap: 6px;
  padding-left: 7px;
}
.bb-line .param-label {
  margin-left: 4px;
}
.bb-line .param-label:first-child {
  margin-left: 0;
  width: 42px;
}
.bb-line .param-label:nth-of-type(2) {
  width: 82px;
  margin-left: 3px;
}
.bb-line .param-label:nth-of-type(3) {
  width: 85px;
  margin-left: 5px;
}
.bb-line .param-label:nth-of-type(4) {
  width: 50px;
  margin-left: 8px;
}
.combo {
  display: flex;
  align-items: center;
  justify-content: space-between;
  flex: none;
  box-sizing: border-box;
  width: 60px;
  height: 22px;
  padding: 0 5px 0 3px;
  border: 1px solid #999;
  border-radius: 2px;
  background: linear-gradient(#ececec, #c4c4c4);
  font-size: 12.5px;
}
.combo i {
  display: flex;
}
.param-line .pill.save.cut {
  width: 80px;
  flex: none;
  margin-left: 9px;
}
.bb-scroll {
  display: flex;
  justify-content: space-between;
  height: 17px;
  margin: 5px 2px 0;
  background: #c6c6c6;
}
.bb-left,
.bb-right {
  display: flex;
  align-items: center;
  background: #dcdcdc;
}
.bb-left {
  width: 17px;
  justify-content: center;
}
.bb-right {
  width: 39px;
  justify-content: flex-end;
  padding-right: 5px;
  box-sizing: border-box;
}
.bb-foot {
  margin: 5px 0 0 4px;
}

.modal {
  position: absolute;
  left: 358px;
  top: 110px;
  width: 961px;
  height: 742px;
  box-sizing: border-box;
  padding: 0 3px 5px 4px;
  background: #f2f2f2;
  border: 1px solid #9a9a9a;
  border-radius: 6px 6px 1px 1px;
  box-shadow: 3px 3px 8px rgba(0, 0, 0, 0.4);
  display: flex;
  flex-direction: column;
}
.modal-title {
  display: flex;
  align-items: center;
  justify-content: space-between;
  flex: none;
  height: 26px;
  margin: 0 -3px 0 -4px;
  padding: 0 10px 0 8px;
  background: linear-gradient(#f8f8f8, #ececec 38%, #a8a8a8 52%, #d8d8d8 78%, #f4f4f4);
  color: #222;
  font-size: 12px;
  letter-spacing: -0.1px;
}
.modal-frame {
  flex: 1;
  display: flex;
  flex-direction: column;
  border: 1px solid #999;
  background: #bebebe;
  overflow: hidden;
}
.modal-tabs {
  display: flex;
  align-items: flex-end;
  flex: none;
  height: 26px;
  padding-left: 3px;
  border-bottom: 1px solid #999;
}
.mtab {
  box-sizing: border-box;
  height: 22px;
  line-height: 25px;
  padding: 0 5px;
  font-size: 12px;
  letter-spacing: -0.1px;
  color: #222;
  white-space: nowrap;
}
.mtab.on {
  background: #fff;
  border: 1px solid #999;
  border-bottom: 0;
  border-radius: 2px 2px 0 0;
  margin: 0 0 -1px;
  height: 23px;
  line-height: 24px;
}
.mtab.dim {
  color: #8c8c8c;
  margin-left: 2px;
}
.mtab.last {
  margin-left: 2px;
}
.modal-pane {
  flex: 1;
  padding: 5px 6px 5px 6px;
  background: #d6d6d6;
  display: flex;
}
.results {
  flex: 1;
  border: 2px solid #111;
  background: #d3d3d3;
  padding: 10px 0 0 5px;
  box-sizing: border-box;
  overflow: hidden;
}
.stat-grid {
  display: grid;
  grid-template-columns: 185px 260px 45px 145px 260px;
  grid-auto-rows: 25px;
  row-gap: 15px;
}
.stat-label {
  font-weight: 700;
  font-size: 12.5px;
  letter-spacing: 0.2px;
  line-height: 16px;
  color: #1a1a1a;
}
.stat-val {
  background: #add8e6;
  line-height: 16px;
  font-size: 12px;
  letter-spacing: -0.3px;
  color: #222;
}
.trades-title {
  height: 18px;
  margin-top: 9px;
  padding-left: 450px;
  font-weight: 700;
  font-size: 12.5px;
  line-height: 18px;
}
.trades-area {
  display: flex;
  margin-top: 5px;
}
.select-side.inner {
  width: 28px;
  height: 383px;
  background: transparent;
}
.select-side.inner .round {
  margin-top: 0;
  margin-left: -2px;
}
.col-list {
  display: flex;
  box-sizing: border-box;
  width: 170px;
  height: 383px;
  flex: none;
  border: 1px solid #aaa;
  background: #999;
  overflow: hidden;
}
.col-scroll {
  display: flex;
  flex-direction: column;
  width: 17px;
  flex: none;
  margin-left: 1px;
  background: #eee;
}
.cs-up,
.cs-down {
  display: flex;
  align-items: center;
  justify-content: center;
  height: 17px;
  background: #eee;
}
.cs-track {
  height: 263px;
  background: #c8c8c8;
}
.cs-down {
  margin-top: auto;
}
.col-items {
  flex: 1;
  margin-right: 3px;
}
.col-item {
  display: flex;
  align-items: center;
  justify-content: flex-end;
  gap: 6px;
  height: 19.1px;
  box-sizing: border-box;
  padding-right: 3px;
  border: 1px solid transparent;
  color: #333;
  font-size: 12px;
  white-space: nowrap;
}
.col-item.hot {
  background: #879ca8;
  border-color: #5f9ccc;
}
.col-check {
  display: flex;
  align-items: center;
  justify-content: center;
  box-sizing: border-box;
  width: 14px;
  height: 14px;
  flex: none;
  background: #fff;
  border: 1px solid #aaa;
}
.trade-grid {
  box-sizing: border-box;
  width: 716px;
  height: 387px;
  margin: 3px 0 0 12px;
  flex: none;
  display: flex;
  flex-direction: column;
  background: #999;
  border: 1px solid #888;
  overflow: hidden;
}
.trade-cols {
  display: grid;
  grid-template-columns: 26px 78px 92px 92px 94px 86px 92px 104px 20px 20px 11px;
  flex: none;
}
.trade-rows {
  flex: 1;
}
.trade-row {
  height: 25px;
  background: #adff2f;
}
.trade-row.loss {
  background: #ff0000;
}
.trade-row .rowhead {
  border-right: 2px solid #76b62a;
}
.trade-row.loss .rowhead {
  border-right-color: #b00;
}
.tcell {
  box-sizing: border-box;
  padding-left: 5px;
  line-height: 26px;
  font-size: 12px;
  letter-spacing: -0.25px;
  color: #222;
  border-right: 1px solid #c8d8c0;
  border-bottom: 1px solid #c8d8c0;
  overflow: hidden;
  white-space: nowrap;
}
.trade-row.loss .tcell {
  color: #300;
}
.trade-row .tcell:nth-child(2) {
  padding-left: 3px;
  letter-spacing: -0.1px;
}
.trade-foot {
  height: 33px;
  background: linear-gradient(#b4b4b4, #eee 40%);
  border-top: 1px solid #888;
  box-sizing: border-box;
}
.fcell.two {
  display: flex;
  flex-direction: column;
  justify-content: center;
  padding-left: 5px;
  line-height: 16px;
  letter-spacing: -0.2px;
}
.trade-foot .fcell:first-child {
  border-right: 2px solid #888;
}
.trade-scroll {
  display: flex;
  height: 15px;
  flex: none;
  background: #ddd;
  border-top: 1px solid #aaa;
}
.ts-btn {
  display: flex;
  align-items: center;
  justify-content: center;
  width: 18px;
  flex: none;
  background: #eee;
}
.ts-btn:last-child {
  width: 28px;
  border-left: 1px solid #ccc;
}
.ts-thumb {
  flex: 1;
  display: flex;
  justify-content: center;
  align-items: center;
  gap: 1px;
  background: linear-gradient(#bbb, #f2f2f2 45%, #c4c4c4);
}
.ts-thumb i {
  width: 1px;
  height: 10px;
  background: #333;
}
</style>
